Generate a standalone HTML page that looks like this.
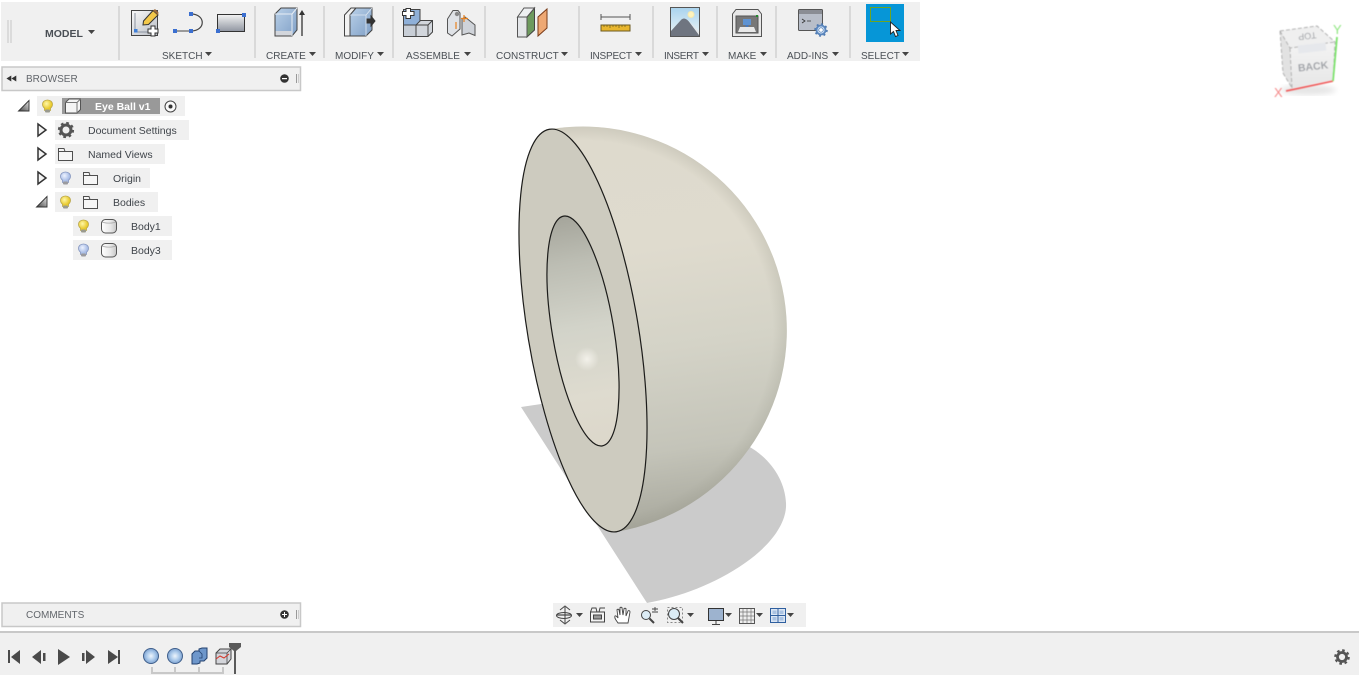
<!DOCTYPE html>
<html><head><meta charset="utf-8"><title>Eye Ball v1</title>
<style>
html,body{margin:0;padding:0;background:#fff;width:1359px;height:675px;overflow:hidden}
svg{display:block;position:absolute;left:0;top:0}
text{font-family:"Liberation Sans",sans-serif;font-size:10px;fill:#4a4f55}
.t{font-size:10.5px;fill:#3f444a}
</style></head><body>
<svg width="1359" height="675" viewBox="0 0 1359 675" xmlns="http://www.w3.org/2000/svg">
<defs>
<linearGradient id="dome" gradientUnits="userSpaceOnUse" x1="625" y1="130" x2="680" y2="530">
<stop offset="0" stop-color="#dedacd"/><stop offset=".3" stop-color="#dfdbce"/><stop offset=".55" stop-color="#d4d3c7"/><stop offset=".8" stop-color="#c4c4b9"/><stop offset="1" stop-color="#a6a69b"/></linearGradient>
<radialGradient id="domeedge" gradientUnits="userSpaceOnUse" cx="583" cy="330.500" r="204">
<stop offset=".93" stop-color="#8e8e80" stop-opacity="0"/><stop offset="1" stop-color="#8e8e80" stop-opacity=".2"/></radialGradient>
<linearGradient id="hole" x1="0" y1="0" x2="0" y2="1">
<stop offset="0" stop-color="#a5a59b"/><stop offset=".2" stop-color="#bcbdb3"/><stop offset=".48" stop-color="#d2d3c9"/><stop offset=".78" stop-color="#dedbcf"/><stop offset="1" stop-color="#dcd7ca"/></linearGradient>
<radialGradient id="hl"><stop offset="0" stop-color="#f3f1ea"/><stop offset="1" stop-color="#f3f1ea" stop-opacity="0"/></radialGradient>
<linearGradient id="blue" x1="0" y1="0" x2="1" y2="1"><stop offset="0" stop-color="#b9d0e8"/><stop offset="1" stop-color="#7f9fc6"/></linearGradient>
<linearGradient id="gr" x1="0" y1="0" x2="0" y2="1"><stop offset="0" stop-color="#f4f4f4"/><stop offset="1" stop-color="#8f95a0"/></linearGradient>
<linearGradient id="lg" x1="0" y1="0" x2="1" y2="1"><stop offset="0" stop-color="#fafafa"/><stop offset="1" stop-color="#b8bcc4"/></linearGradient>
<linearGradient id="sky" x1="0" y1="0" x2="0" y2="1"><stop offset="0" stop-color="#a9d3ee"/><stop offset="1" stop-color="#eef5f6"/></linearGradient>
<radialGradient id="yb" cx=".4" cy=".35"><stop offset="0" stop-color="#fff7a8"/><stop offset="1" stop-color="#e8c92c"/></radialGradient>
<radialGradient id="bb" cx=".4" cy=".35"><stop offset="0" stop-color="#eef3ff"/><stop offset="1" stop-color="#a9bde6"/></radialGradient>
<radialGradient id="orb" cx=".5" cy=".5"><stop offset="0" stop-color="#eef5fc"/><stop offset=".6" stop-color="#a9c8ea"/><stop offset="1" stop-color="#7ea2cf"/></radialGradient>
<linearGradient id="cyl" x1="0" y1="0" x2="1" y2="0"><stop offset="0" stop-color="#fff"/><stop offset=".6" stop-color="#e8e8e8"/><stop offset="1" stop-color="#c6c6c6"/></linearGradient>
<linearGradient id="cube" x1="0" y1="0" x2="0" y2="1"><stop offset="0" stop-color="#f4f4f4"/><stop offset="1" stop-color="#e6e6e6"/></linearGradient>
<linearGradient id="op" x1="1" y1="0" x2="0" y2="1"><stop offset="0" stop-color="#e8e8e8"/><stop offset="1" stop-color="#444"/></linearGradient>
<filter id="b1"><feGaussianBlur stdDeviation="3"/></filter>
<filter id="b0"><feGaussianBlur stdDeviation=".5"/></filter>
<g id="bulbY"><path d="M-3 5.500V3.200C-4.500 2-5 .8-5-.6-5-3.300-2.800-5 0-5S5-3.300 5-.6C5 .8 4.500 2 3 3.200V5.500Z" fill="url(#yb)" stroke="#b9a64a" stroke-width=".8"/><rect x="-2.500" y="4.500" width="5" height="3" rx="1" fill="#9a9a8e"/></g>
<g id="bulbB"><path d="M-3 5.500V3.200C-4.500 2-5 .8-5-.6-5-3.300-2.800-5 0-5S5-3.300 5-.6C5 .8 4.500 2 3 3.200V5.500Z" fill="url(#bb)" stroke="#8596bf" stroke-width=".8"/><rect x="-2.500" y="4.500" width="5" height="3" rx="1" fill="#9a9a9e"/></g>
<path id="folder" d="M.5 2.500V12.500H14.500V3.500H7L6 .5H.5Z M.5 3.500H7" fill="#f6f6f6" stroke="#4f4f4f" stroke-width="1"/>
<path id="tri" d="M1 1L9 7L1 13Z" fill="#f4f4f4" stroke="#333" stroke-width="1.500"/>
<path id="open" d="M.5 11H11V.5Z" fill="url(#op)" stroke="#333" stroke-width=".9"/>
<g id="cylinder"><rect x=".5" y=".5" width="15" height="13.500" rx="4" fill="url(#cyl)" stroke="#555"/><path d="M1.500 3C4 4.500 12 4.500 14.500 3" fill="none" stroke="#aaa" stroke-width=".8"/></g>
<path id="dd" d="M0 0H7L3.500 4Z" fill="#444"/>
</defs>

<!-- toolbar -->
<rect x="1" y="2" width="919" height="59" fill="#f0f0f0"/>
<path d="M8 20V43M11 20V43" stroke="#c6c6c6" stroke-width="1"/>
<g fill="#d9d9d9">
<rect x="118" y="6" width="2" height="54"/><rect x="254" y="6" width="2" height="52"/><rect x="323" y="6" width="2" height="52"/><rect x="392" y="6" width="2" height="52"/><rect x="484" y="6" width="2" height="52"/><rect x="578" y="6" width="2" height="52"/><rect x="652" y="6" width="2" height="52"/><rect x="716" y="6" width="2" height="52"/><rect x="775" y="6" width="2" height="52"/><rect x="849" y="6" width="2" height="52"/>
</g>
<text x="45" y="37" style="font-weight:bold;font-size:10.500px" fill="#3c3f44">MODEL</text>
<use href="#dd" x="88" y="30"/>
<text x="162" y="59">SKETCH</text><use href="#dd" x="205" y="52"/>
<text x="266" y="59">CREATE</text><use href="#dd" x="309" y="52"/>
<text x="335" y="59">MODIFY</text><use href="#dd" x="377" y="52"/>
<text x="406" y="59">ASSEMBLE</text><use href="#dd" x="464" y="52"/>
<text x="496" y="59">CONSTRUCT</text><use href="#dd" x="561" y="52"/>
<text x="590" y="59" textLength="42">INSPECT</text><use href="#dd" x="635" y="52"/>
<text x="664" y="59" textLength="35">INSERT</text><use href="#dd" x="702" y="52"/>
<text x="728" y="59">MAKE</text><use href="#dd" x="760" y="52"/>
<text x="787" y="59">ADD-INS</text><use href="#dd" x="832" y="52"/>
<text x="861" y="59">SELECT</text><use href="#dd" x="902" y="52"/>

<!-- sketch icons -->
<rect x="131.500" y="10.500" width="26" height="25" fill="url(#lg)" stroke="#444"/>
<path d="M135 13V32H155" fill="none" stroke="#8b93a0" stroke-width="1"/>
<rect x="134" y="29" width="3.500" height="3.500" fill="#3f7fd8"/>
<path d="M143.500 21L153 10.500L158 15L148.500 24.500L143 25Z" fill="#f3c84a" stroke="#333" stroke-width="1"/>
<path d="M153 10.500L155 9L158.500 12.500L158 15Z" fill="#9b6a3c"/>
<path d="M151 26H155V29H158V33H155V36H151V33H148V29H151Z" fill="#fff" stroke="#333" stroke-width="1"/>
<path d="M175 31H191" stroke="#444" stroke-width="1"/>
<path d="M191 14C206 14 206 31 191 31" fill="none" stroke="#444" stroke-width="1.200"/>
<g fill="#3b6fd0"><rect x="173" y="29" width="4" height="4"/><rect x="189" y="29" width="4" height="4"/><rect x="189" y="12" width="4" height="4"/></g>
<rect x="217.500" y="14.500" width="27" height="17" fill="url(#gr)" stroke="#333"/>
<g fill="#3b6fd0"><rect x="242" y="13" width="4" height="4"/><rect x="216" y="29" width="4" height="4"/></g>

<!-- create -->
<path d="M275 14L281 8H297V30L292 36H275Z" fill="url(#blue)" stroke="#444"/>
<path d="M275 14H292V36M292 14L297 8" fill="none" stroke="#e8eef5" stroke-width="1"/>
<path d="M275.500 31H292V35.500H275.500Z" fill="#d3d6dc"/>
<path d="M302 36V14" stroke="#333" stroke-width="1.300"/><path d="M299 15L302 10L305 15Z" fill="#333"/>

<!-- modify -->
<path d="M344.500 15L351 8H356L350 15V36H344.500Z" fill="#f2f2f2" stroke="#444"/>
<path d="M350 15L356 8H372V30L366 36H350Z" fill="url(#blue)" stroke="#444"/>
<path d="M350 15H366V36M366 15L372 8" fill="none" stroke="#dfe8f2" stroke-width=".8"/>
<path d="M367 19H371V16L375 21L371 26V23H367Z" fill="#333" stroke="#333"/>

<!-- assemble -->
<path d="M403.500 9.500H420V25H403.500Z" fill="#8fb0d8" stroke="#444"/>
<path d="M416 25L420.500 20.500H432.500V32L428 36.500H416Z" fill="#d2d6dc" stroke="#444"/>
<rect x="403.500" y="25" width="12.500" height="11.500" fill="#c8ced6" stroke="#444"/>
<path d="M416 25H428V36.500M428 25L432.500 20.500" fill="none" stroke="#444"/>
<path d="M406 8.500H410.500V11.500H414V15.500H410.500V18.500H406V15.500H402.500V11.500H406Z" fill="#fff" stroke="#333"/>
<path d="M447.500 33V19L453 10.500H458L460 13V29L452 36Z" fill="#dfe2e6" stroke="#555"/>
<path d="M462 35V19L465 17L475 25V35.500L469 33Z" fill="#cfd3d9" stroke="#555"/>
<circle cx="457" cy="14" r="2.200" fill="#888"/>
<path d="M456 22V29M464 15V22M461 18.500H468" stroke="#e8821e" stroke-width="1.200"/>

<!-- construct -->
<path d="M527 17L534.500 8V30L527 37Z" fill="#6d9a5e" stroke="#444"/>
<path d="M517.500 17L524 8H534.500L527 17Z" fill="#eef0f2" stroke="#555"/>
<path d="M517.500 17H527V37H517.500Z" fill="#e4e6e9" stroke="#555"/>
<path d="M538 36V17L547 9V28Z" fill="#eea873" stroke="#7a3b18"/>

<!-- inspect -->
<path d="M601 17H630M601 14V20M630 14V20" stroke="#555" stroke-width="1"/>
<rect x="601" y="25" width="29" height="6" fill="#e8b62e" stroke="#6b5a20"/>
<path d="M604 25V27M607 25V27M610 25V28M613 25V27M616 25V27M619 25V28M622 25V27M625 25V27" stroke="#6b5a20" stroke-width=".7"/>

<!-- insert -->
<rect x="670.500" y="7.500" width="29" height="29" fill="url(#sky)" stroke="#555"/>
<circle cx="691" cy="14.500" r="3" fill="#fff3bc" stroke="#f5e9b0"/>
<path d="M671 31L681 20C684 17 687 19 690 23L699 35V36H671Z" fill="#6f7580"/>
<path d="M688 20L699 32V35Z" fill="#e4e6e8"/>

<!-- make -->
<path d="M732.500 14L736 9.500H758L761.500 14V36.500H732.500Z" fill="#e8e8e8" stroke="#555"/>
<rect x="736" y="16" width="22" height="17" fill="#777" stroke="#555"/>
<rect x="743" y="19" width="8" height="6" fill="#5f93d2"/><rect x="745.500" y="25" width="3" height="3" fill="#4a78b8"/>
<path d="M738 32L740 27H754L756 32Z" fill="#e8e8e8"/>
<rect x="756" y="15" width="2" height="2" fill="#1f8b2a"/>

<!-- add-ins -->
<rect x="798.500" y="9.500" width="24" height="21" rx="1" fill="#b8bec9" stroke="#555"/>
<rect x="799" y="10" width="23" height="4" fill="#8a8d94"/>
<path d="M802 19L805 21L802 23M807 21H811" fill="none" stroke="#333" stroke-width=".8"/>
<circle cx="821" cy="30" r="4.500" fill="#cfe0f5" stroke="#5a86bd" stroke-width="1.800"/>
<circle cx="821" cy="30" r="6" fill="none" stroke="#4c78b0" stroke-width="1.500" stroke-dasharray="2 2.700"/>
<circle cx="821" cy="30" r="2.200" fill="#fff" stroke="#3d6ea8" stroke-width=".6"/>

<!-- select -->
<rect x="866" y="4" width="38" height="38" fill="#0696d7"/>
<rect x="870.500" y="7.500" width="20" height="14" fill="none" stroke="#6fa420" stroke-width="1"/>
<path d="M890.500 22V34L893.500 31.500L895.500 36.500L898 35.500L896 30.500H900Z" fill="#fff" stroke="#222" stroke-width=".9"/>

<!-- browser bar -->
<rect x="2" y="67" width="298.500" height="23.500" fill="#f0f0f0" stroke="#c8c8c8" stroke-width="1.500"/>
<path d="M11 76V81L7 78.500ZM16 76V81L12 78.500Z" fill="#333" stroke="#333" stroke-width=".6"/>
<text x="26" y="82" style="font-size:10px;fill:#62666b">BROWSER</text>
<circle cx="284.500" cy="78.500" r="4.300" fill="#333"/><rect x="282" y="78" width="5" height="1.200" fill="#fff"/>
<path d="M296.500 74V83" stroke="#999" stroke-width="1"/><path d="M298.500 74V83" stroke="#ccc" stroke-width="1"/>

<!-- tree -->
<g fill="#f0f0f0">
<rect x="37" y="96" width="148" height="20"/><rect x="55" y="120" width="134" height="20"/><rect x="55" y="144" width="110" height="20"/><rect x="55" y="168" width="95" height="20"/><rect x="55" y="192" width="103" height="20"/><rect x="73" y="216" width="99" height="20"/><rect x="73" y="240" width="99" height="20"/>
</g>
<rect x="62" y="98" width="98" height="16" fill="#999"/>
<use href="#open" x="18" y="100"/>
<use href="#bulbY" x="47.500" y="105"/>
<path d="M65.500 102.500L69 99H80.500V109.500L77 113H65.500Z" fill="#f4f4f4" stroke="#555"/><path d="M77 102.500V113M65.500 102.500H77L80.500 99" fill="none" stroke="#777"/>
<text x="95" y="110" style="font-weight:bold;font-size:10.500px;fill:#fff">Eye Ball v1</text>
<circle cx="170.500" cy="106.500" r="5.500" fill="#fafafa" stroke="#444"/><circle cx="170.500" cy="106.500" r="2" fill="#333"/>

<use href="#tri" x="37" y="123"/>
<circle cx="66" cy="130" r="5" fill="none" stroke="#555" stroke-width="3"/>
<circle cx="66" cy="130" r="7" fill="none" stroke="#555" stroke-width="2.200" stroke-dasharray="2.700 2.800"/>
<text class="t" x="88" y="134">Document Settings</text>

<use href="#tri" x="37" y="147"/>
<use href="#folder" x="58" y="148"/>
<text class="t" x="88" y="158">Named Views</text>

<use href="#tri" x="37" y="171"/>
<use href="#bulbB" x="65.500" y="177"/>
<use href="#folder" x="83" y="172"/>
<text class="t" x="113" y="182">Origin</text>

<use href="#open" x="36" y="196"/>
<use href="#bulbY" x="65.500" y="201"/>
<use href="#folder" x="83" y="196"/>
<text class="t" x="113" y="206">Bodies</text>

<use href="#bulbY" x="83.500" y="225"/>
<use href="#cylinder" x="101" y="219"/>
<text class="t" x="131" y="230">Body1</text>
<use href="#bulbB" x="83.500" y="249"/>
<use href="#cylinder" x="101" y="243"/>
<text class="t" x="131" y="254">Body3</text>

<!-- shadow -->
<path d="M521 407L548 403L620 440L748 446C770 458 785 480 786 503C787 520 775 542 745 563C715 584 680 597 647 603Z" fill="#cbcbcb"/>

<!-- dome: exact half circle across the cut plane (radius auto-scales to the chord) -->
<path d="M549.500 129.300A203 203 0 0 1 616.500 531.700Z" fill="url(#dome)"/>
<path d="M549.500 129.300A203 203 0 0 1 616.500 531.700Z" fill="url(#domeedge)"/>
<!-- face -->
<ellipse cx="583" cy="330.500" rx="55.300" ry="204" transform="rotate(-9.460 583 330.500)" fill="#cdcbbf" stroke="#1c1c1a" stroke-width="1.200"/>
<!-- hole -->
<ellipse cx="583" cy="331" rx="30.800" ry="116.500" transform="rotate(-9.560 583 331)" fill="url(#hole)" stroke="#1c1c1a" stroke-width="1.200"/>
<ellipse cx="587" cy="359" rx="12" ry="12" fill="url(#hl)"/>

<!-- viewcube -->
<ellipse cx="1308" cy="90" rx="28" ry="5" fill="#000" opacity=".1" filter="url(#b1)"/>
<g filter="url(#b0)">
<path d="M1280 31L1317 26L1335 42L1290 48Z" fill="#efefef"/>
<path d="M1280 31L1290 48L1292 88L1283 73Z" fill="#e2e2e2"/>
<path d="M1290 48L1335 42L1333 80L1292 88Z" fill="url(#cube)"/>
<path d="M1280 31L1317 26L1335 42L1333 80M1280 31L1283 73L1292 88M1280 31L1290 48L1335 42M1290 48L1292 88" fill="none" stroke="#a8a8a8" stroke-width=".9" stroke-dasharray="4 2"/>
<rect x="1298" y="44" width="28" height="8" fill="#e6e8ec" transform="rotate(-6 1312 48)"/>
<path d="M1286 91L1333 81" stroke="#f06060" stroke-width="1.800"/>
<path d="M1333 81L1337 37" stroke="#7ce36a" stroke-width="1.800"/>
<text x="1313" y="70" text-anchor="middle" transform="rotate(-6 1313 66)" style="font-size:10.500px;font-weight:bold;fill:#a0a3a8">BACK</text>
<text x="0" y="0" text-anchor="middle" transform="translate(1307 33) rotate(174)" style="font-size:9px;font-weight:normal;fill:#9b9ea3">TOP</text>
<text x="1274" y="97" style="font-size:13px;fill:#f58a8a">X</text>
<text x="1333" y="34" style="font-size:13px;fill:#8fe680">Y</text>
</g>

<!-- nav bar -->
<rect x="553" y="603" width="253" height="24" fill="#f0f0f0"/>
<g fill="none" stroke="#444" stroke-width="1">
<path d="M565 607V623M560 610L565 606L570 610M560 620L565 624L570 620"/>
<ellipse cx="564" cy="615.500" rx="7.500" ry="3"/>
<path d="M557 615H571" stroke-width="1.200"/>
<rect x="590.500" y="612" width="14" height="10" fill="#f4f4f4"/>
<rect x="593.500" y="615" width="8" height="4" fill="#999"/>
<path d="M590.500 612L592 608H596L597 612M599 612L600 608H605"/>
<path d="M618 623C616 620 614 618 615 616C616 615 618 618 618 618L617 610C617 609 619 609 619 610L620 615L620 608C620 607 622 607 622 608L623 615L624 609C624 608 626 608 626 609L626 616L628 611C629 610 630 611 630 612L628 623Z" fill="#fff" stroke-width=".9"/>
<circle cx="646" cy="615" r="4.500" fill="#dcecf5"/><path d="M649.500 618.500L654 623" stroke-width="2"/>
<path d="M652 612H658M655 607V611M652 609H658" stroke-width=".9"/>
<rect x="667.500" y="607.500" width="15" height="15" stroke="#888" stroke-dasharray="2 2"/>
<circle cx="674" cy="614" r="5.500" fill="#dcecf5"/><path d="M678 618L683 623" stroke-width="2"/>
<rect x="708.500" y="608.500" width="15" height="12" fill="#9db3cf" stroke="#333"/>
<path d="M716 621V624M712 624.500H720"/>
<rect x="739.500" y="608.500" width="15" height="15" fill="#eee" stroke="#555"/>
<path d="M743 609V623M747 609V623M751 609V623M740 612H754M740 616H754M740 620H754" stroke="#777" stroke-width=".7"/>
<rect x="770.500" y="608.500" width="15" height="14" fill="#dbe6f4" stroke="#2f5f9f"/>
<rect x="772.500" y="610.500" width="4" height="3.500" fill="#a9c2e2" stroke="none"/><rect x="779.500" y="610.500" width="4" height="3.500" fill="#a9c2e2" stroke="none"/><rect x="772.500" y="617" width="4" height="3.500" fill="#a9c2e2" stroke="none"/><rect x="779.500" y="617" width="4" height="3.500" fill="#a9c2e2" stroke="none"/>
<path d="M778 609V622M771 615.500H785" stroke="#2f5f9f"/>
</g>
<use href="#dd" x="576" y="613"/><use href="#dd" x="687" y="613"/><use href="#dd" x="725" y="613"/><use href="#dd" x="756" y="613"/><use href="#dd" x="787" y="613"/>

<!-- comments bar -->
<rect x="2" y="603" width="298.500" height="23.500" fill="#f0f0f0" stroke="#c8c8c8" stroke-width="1.500"/>
<text x="26" y="618" style="font-size:10px;fill:#62666b">COMMENTS</text>
<circle cx="284.500" cy="614.500" r="4.300" fill="#333"/><path d="M282 614.500H287M284.500 612V617" stroke="#fff" stroke-width="1"/>
<path d="M296.500 610V619" stroke="#999" stroke-width="1"/><path d="M298.500 610V619" stroke="#ccc" stroke-width="1"/>

<!-- timeline -->
<rect x="0" y="631" width="1359" height="2" fill="#c8c8c8"/>
<rect x="0" y="633" width="1359" height="42" fill="#f0f0f0"/>
<g fill="#4a4a4a">
<rect x="8" y="650" width="2" height="13"/><path d="M20 650V664L11 657Z"/>
<path d="M41 650V664L32 657Z"/><rect x="43" y="653" width="2.500" height="8"/>
<path d="M58 649L70 657L58 665Z"/>
<rect x="82" y="653" width="2.500" height="8"/><path d="M86 650L95 657L86 664Z"/>
<path d="M108 650L118 657L108 664Z"/><rect x="118" y="650" width="2" height="14"/>
</g>
<circle cx="151" cy="656" r="7.500" fill="url(#orb)" stroke="#3f5f8c" stroke-width="1"/>
<circle cx="175" cy="656" r="7.500" fill="url(#orb)" stroke="#3f5f8c" stroke-width="1"/>
<path d="M192 654L195 651H199V649L202 648H207V658L204 661H200V663L197 664H192Z" fill="#6e97cb" stroke="#24426f"/>
<path d="M199 651L202 654V658H199" fill="none" stroke="#24426f" stroke-width=".8"/>
<path d="M216 653L220 649H231V659L227 664H216Z" fill="#d3d5da" stroke="#444"/>
<path d="M216 653H227V664M227 653L231 649" fill="none" stroke="#444" stroke-width=".8"/>
<path d="M216 659L220 656L224 658L229 654" fill="none" stroke="#d8362a" stroke-width="1"/>
<path d="M152 667V673H223V667M175 667V673M199 667V673" fill="none" stroke="#c8c8c8" stroke-width="2"/>
<path d="M229 643H241V647L236 651H234L229 647Z" fill="#5a5a5a"/>
<rect x="234" y="650" width="2" height="24" fill="#5a5a5a"/>
<circle cx="1342" cy="657" r="4.500" fill="none" stroke="#555" stroke-width="2.800"/>
<circle cx="1342" cy="657" r="6.700" fill="none" stroke="#555" stroke-width="2.200" stroke-dasharray="2.600 2.650"/>
</svg>
</body></html>
